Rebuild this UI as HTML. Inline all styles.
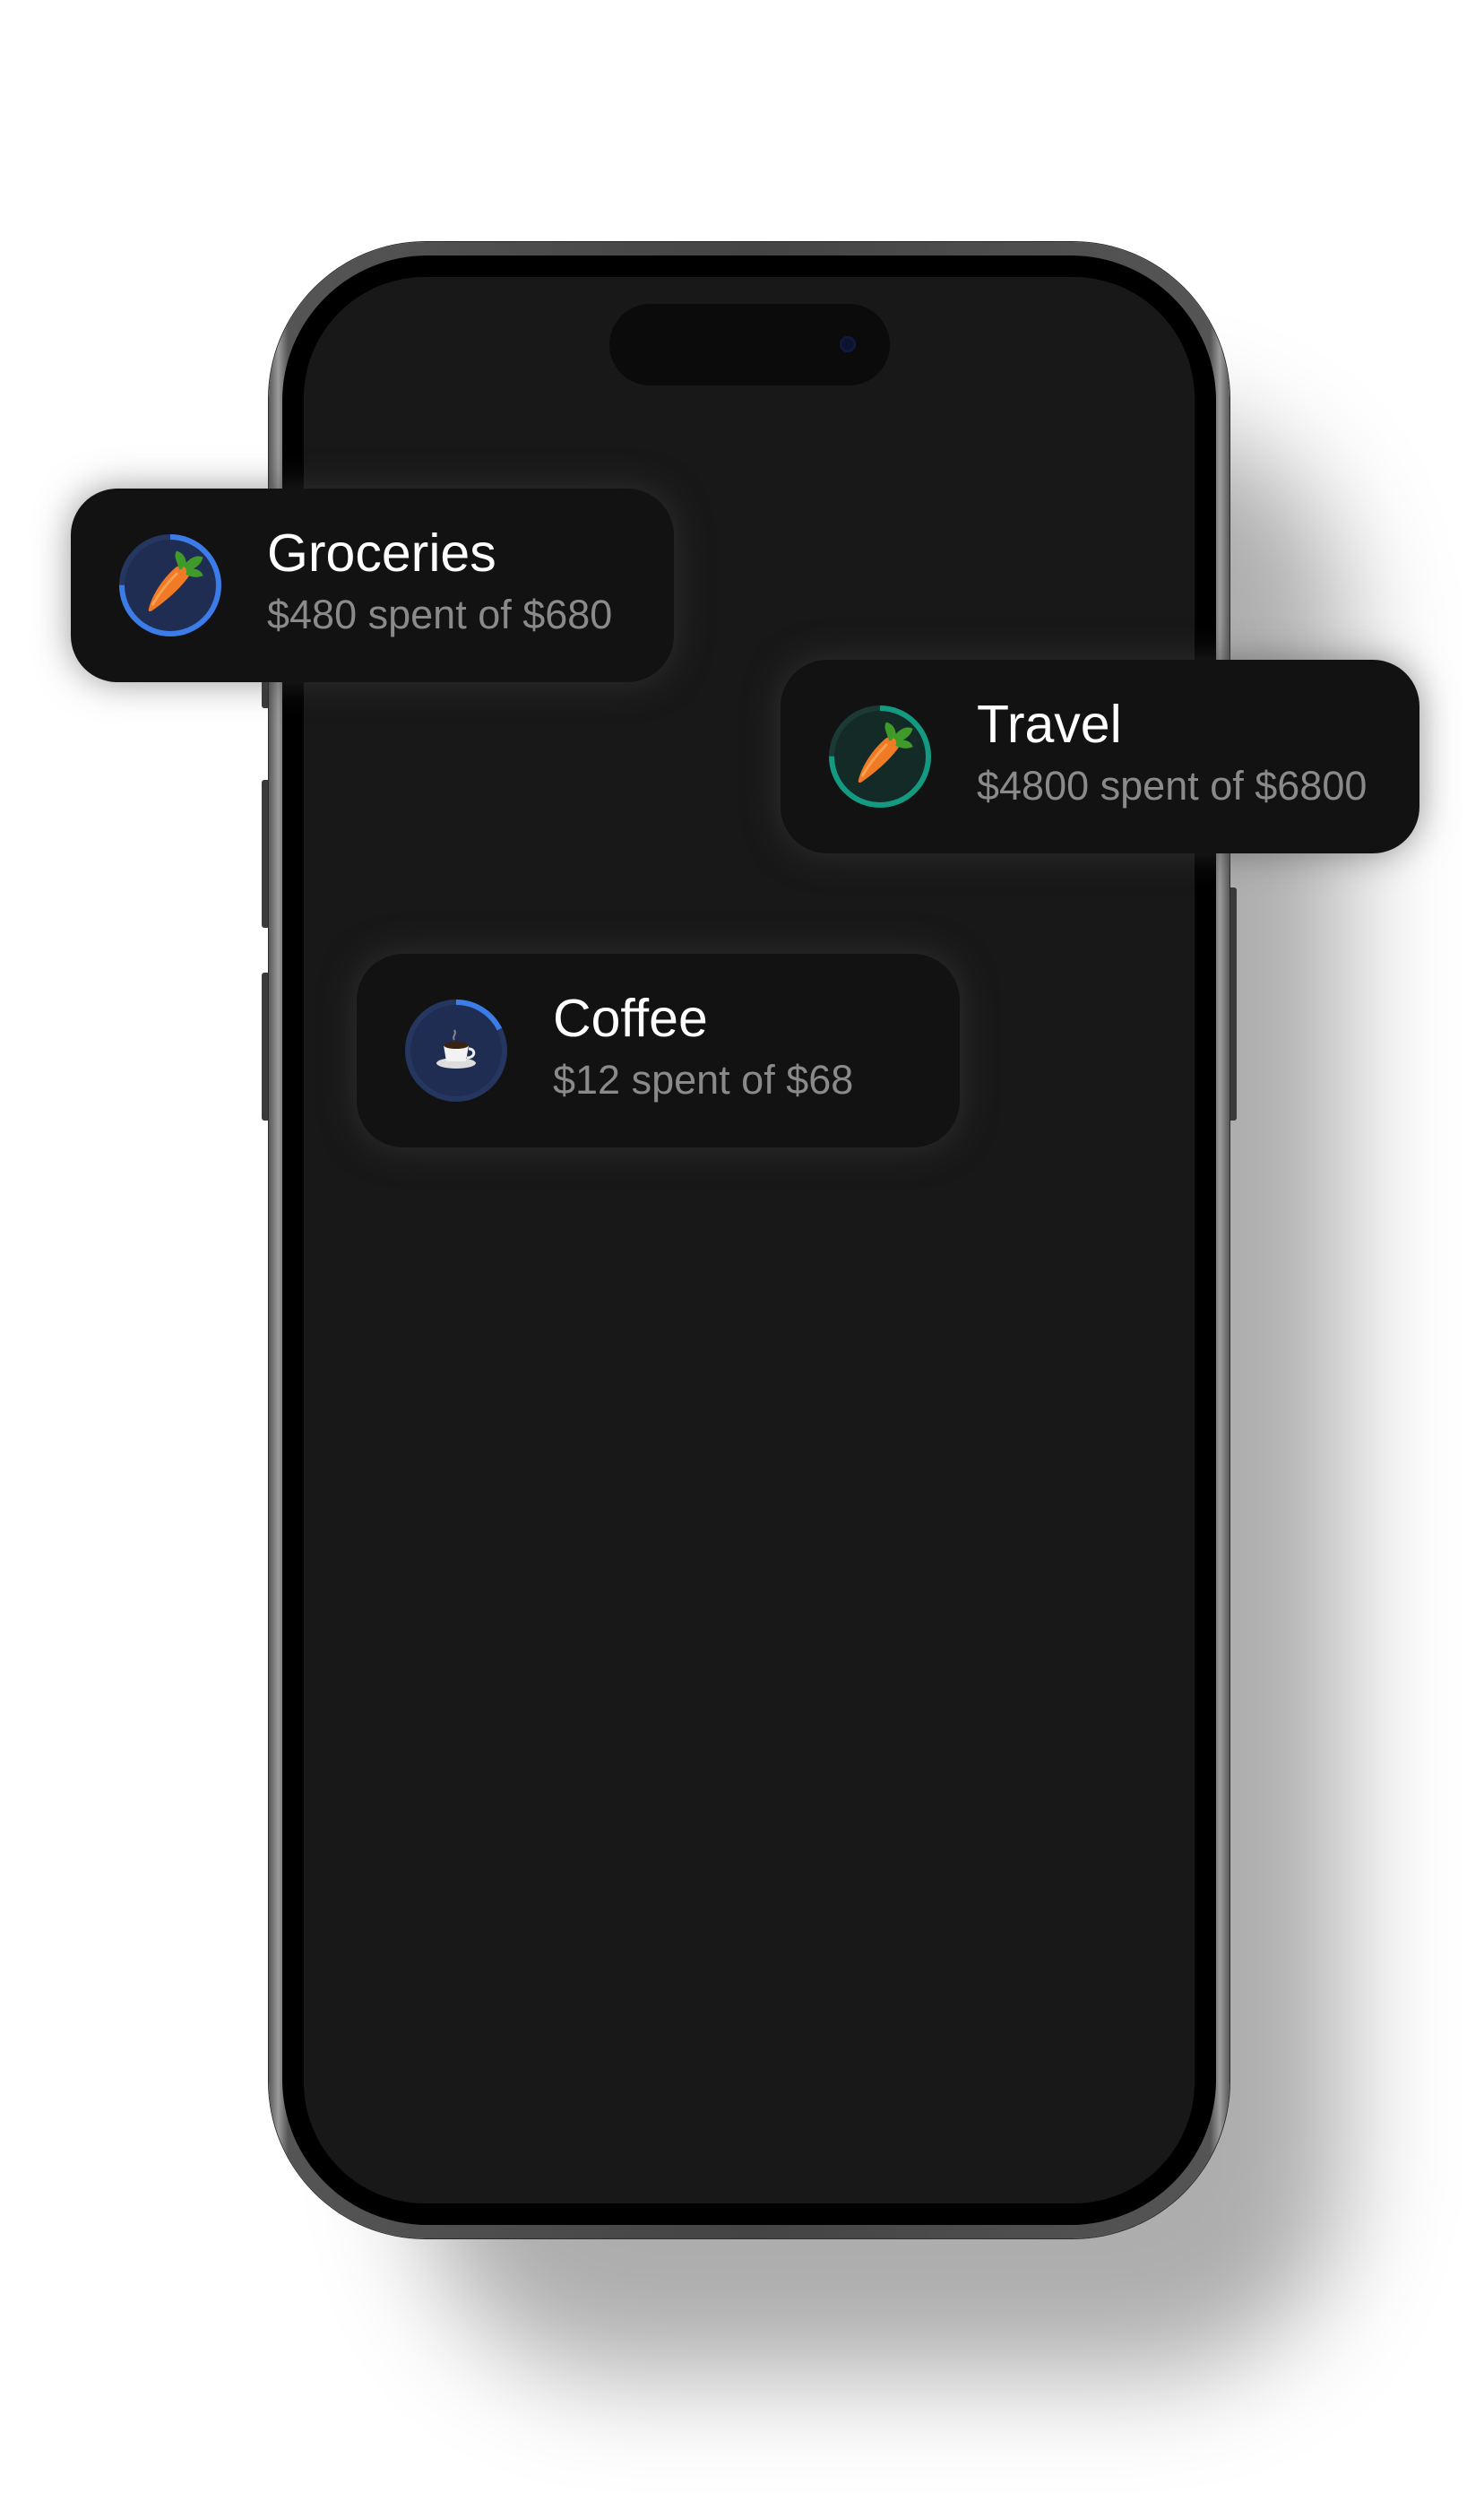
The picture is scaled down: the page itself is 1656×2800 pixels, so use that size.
<!DOCTYPE html>
<html><head><meta charset="utf-8">
<style>
html,body{margin:0;padding:0;background:#fff;}
body{width:1656px;height:2800px;position:relative;overflow:hidden;font-family:"Liberation Sans",sans-serif;}
.shadow{position:absolute;left:470px;top:470px;width:1030px;height:2180px;border-radius:220px;background:rgba(0,0,0,0.32);filter:blur(60px);}
.btn{position:absolute;background:#3a3a3a;border-radius:3px;}
.phone{position:absolute;left:300px;top:270px;width:1072px;height:2227px;border-radius:175px;background:linear-gradient(90deg,#5a5a5a,#9a9a9a 1%,#555 2%,#444 50%,#555 98%,#9a9a9a 99%,#5a5a5a);box-shadow:0 0 0 1px #2a2a2a;}
.bezel{position:absolute;left:15px;top:15px;right:15px;bottom:15px;border-radius:162px;background:#000;}
.screen{position:absolute;left:39px;top:39px;right:39px;bottom:39px;border-radius:135px;background:#181818;}
.island{position:absolute;left:680px;top:339px;width:313px;height:91px;border-radius:46px;background:#0b0b0b;}
.cam{position:absolute;left:937px;top:375px;width:18px;height:18px;border-radius:50%;background:#0d1430;box-shadow:inset 0 0 4px #1a2a60;}
.card{position:absolute;width:673px;height:216px;border-radius:52px;background:#121212;box-shadow:0 0 40px rgba(70,70,70,0.55);}
.card svg.ic{position:absolute;left:53px;top:50px;}
.t{position:absolute;left:219px;top:38px;color:#fff;font-size:59px;white-space:nowrap;}
.s{position:absolute;left:219px;top:115px;color:#8a8a8a;font-size:45px;white-space:nowrap;}
</style></head><body>
<div class="shadow"></div>
<div class="btn" style="left:292px;top:745px;width:10px;height:45px"></div>
<div class="btn" style="left:292px;top:870px;width:10px;height:165px"></div>
<div class="btn" style="left:292px;top:1085px;width:10px;height:165px"></div>
<div class="btn" style="left:1370px;top:990px;width:10px;height:260px"></div>
<div class="phone"><div class="bezel"></div><div class="screen"></div></div>
<div class="island"></div><div class="cam"></div>

<svg width="0" height="0" style="position:absolute">
<defs>
<g id="carrot">
<path d="M-24 26 C-20 10 -8 -8 6 -20 C14 -26 24 -20 22 -12 C14 0 0 14 -20 28 C-23 30 -25 29 -24 26Z" fill="#f07a25"/>
<path d="M-20 22 C-12 8 -2 -4 8 -14" stroke="#f7a050" stroke-width="3" fill="none"/>
<path d="M12 -18 C10 -26 6 -32 8 -36 C14 -34 16 -28 16 -22 M16 -20 C22 -28 28 -32 34 -30 C32 -24 26 -20 18 -18 M18 -16 C24 -18 32 -16 34 -12 C28 -10 22 -12 18 -14" fill="#3f9a2a" stroke="#3f9a2a" stroke-width="4"/>
</g>
<g id="cup">
<ellipse cx="0" cy="14" rx="22" ry="6" fill="#ddd"/>
<path d="M-14 -6 L14 -6 L11 12 L-11 12 Z" fill="#f2f2f2"/>
<ellipse cx="0" cy="-6" rx="14" ry="4" fill="#3b2314"/>
<path d="M14 -2 C22 -2 22 8 12 8" stroke="#eee" stroke-width="3" fill="none"/>
<path d="M-2 -12 C-5 -16 1 -18 -2 -23" stroke="#888" stroke-width="2" fill="none"/>
</g>
</defs></svg>

<div class="card" style="left:79px;top:545px">
<svg class="ic" width="116" height="116" viewBox="-58 -58 116 116">
<circle r="55" fill="#1f2d52"/>
<circle r="54" fill="none" stroke="#253760" stroke-width="6"/>
<circle r="54" fill="none" stroke="#3b7ce8" stroke-width="6" stroke-dasharray="254.5 339.3" transform="rotate(-90)"/>
<use href="#carrot"/>
</svg>
<div class="t">Groceries</div><div class="s">$480 spent of $680</div>
</div>

<div class="card" style="left:871px;top:736px;width:713px">
<svg class="ic" width="116" height="116" viewBox="-58 -58 116 116">
<circle r="55" fill="#132a27"/>
<circle r="54" fill="none" stroke="#1c3a34" stroke-width="6"/>
<circle r="54" fill="none" stroke="#149a80" stroke-width="6" stroke-dasharray="254.5 339.3" transform="rotate(-90)"/>
<use href="#carrot"/>
</svg>
<div class="t">Travel</div><div class="s">$4800 spent of $6800</div>
</div>

<div class="card" style="left:398px;top:1064px">
<svg class="ic" width="116" height="116" viewBox="-58 -58 116 116">
<circle r="55" fill="#1f2d52"/>
<circle r="54" fill="none" stroke="#253760" stroke-width="6"/>
<circle r="54" fill="none" stroke="#3b7ce8" stroke-width="6" stroke-dasharray="60 339.3" transform="rotate(-90)"/>
<use href="#cup"/>
</svg>
<div class="t">Coffee</div><div class="s">$12 spent of $68</div>
</div>
</body></html>
